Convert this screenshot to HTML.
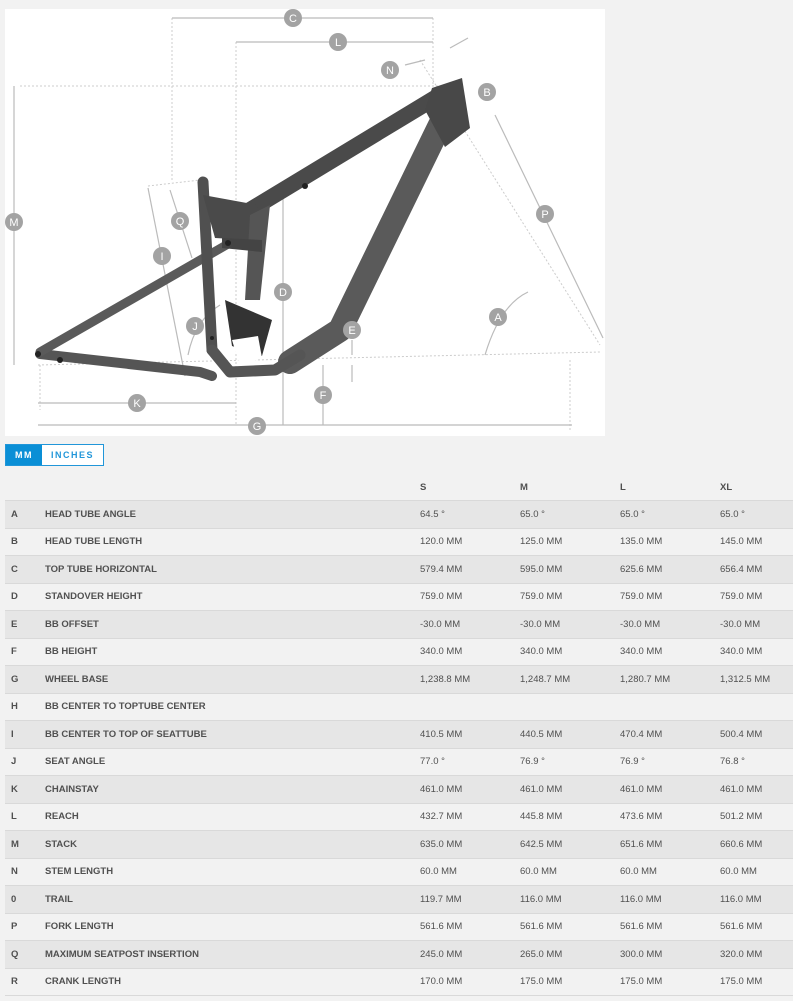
<!DOCTYPE html>
<html><head><style>
body{margin:0;background:#f2f2f2;font-family:"Liberation Sans",sans-serif;width:793px;height:1001px;position:relative;overflow:hidden}
.img{position:absolute;left:5px;top:9px;width:600px;height:427px;background:#fff}
.btns{position:absolute;left:5px;top:444px;height:20px;display:flex;border:1px solid #2196d9}
.btns div{font-size:9px;font-weight:bold;letter-spacing:1.5px;line-height:20px;padding:0 9px}
.mm{background:#0a8fd6;color:#fff}
.in{background:#fff;color:#2196d9}
table{position:absolute;left:5px;top:475px;width:788px;border-collapse:collapse;table-layout:fixed;font-size:9.5px;color:#505050}
td{height:26.5px;padding:0;border-bottom:1px solid #d9d9d9;white-space:nowrap}
tr.h td{height:25px;font-weight:bold}
tr:nth-child(even) td{background:#e6e6e6}
td.a{padding-left:6px;font-weight:bold}
td.n{font-weight:bold}
</style></head><body>
<div class="img">
<svg width="600" height="427" viewBox="5 9 600 427" xmlns="http://www.w3.org/2000/svg">
<g stroke="#ccc" stroke-width="1" stroke-dasharray="2,2" fill="none">
<line x1="20" y1="86" x2="440" y2="86"/>
<line x1="38" y1="365" x2="600" y2="352"/>
<line x1="172" y1="18" x2="172" y2="180"/>
<line x1="236" y1="42" x2="236" y2="425"/>
<line x1="433" y1="18" x2="433" y2="86"/>
<line x1="420" y1="60" x2="600" y2="345"/>
<line x1="148" y1="186" x2="200" y2="180"/>
<line x1="40" y1="365" x2="40" y2="410"/>
<line x1="570" y1="360" x2="570" y2="430"/>
</g>
<g stroke="#bbb" stroke-width="1.2" fill="none">
<line x1="14" y1="86" x2="14" y2="365"/>
<line x1="172" y1="18" x2="433" y2="18"/>
<line x1="236" y1="42" x2="433" y2="42"/>
<line x1="495" y1="115" x2="603" y2="338"/>
<line x1="148" y1="188" x2="185" y2="376"/>
<line x1="170" y1="190" x2="192" y2="258"/>
<line x1="283" y1="185" x2="283" y2="425"/>
<line x1="38" y1="403" x2="236" y2="403"/>
<line x1="38" y1="425" x2="572" y2="425"/>
<line x1="323" y1="365" x2="323" y2="425"/>
<line x1="352" y1="340" x2="352" y2="355"/>
<line x1="352" y1="365" x2="352" y2="382"/>
<path d="M485 355 Q500 305 528 292"/>
<path d="M188 355 Q195 320 220 305"/>
<line x1="450" y1="48" x2="468" y2="38"/>
<line x1="405" y1="65" x2="425" y2="60"/>
</g>
<g fill="none" stroke-linecap="round" stroke-linejoin="round">
<path d="M40 354 L200 372 L212 376" stroke="#555" stroke-width="10"/>
<path d="M40 352 L235 240" stroke="#5a5a5a" stroke-width="9"/>
<path d="M250 210 L440 95" stroke="#4a4a4a" stroke-width="16"/>
<path d="M440 125 L340 330 L290 362" stroke="#5a5a5a" stroke-width="24"/>
<path d="M203 182 L212 350" stroke="#505050" stroke-width="11"/>
<path d="M212 350 L230 372 L275 370 L300 355" stroke="#555" stroke-width="11"/>
</g>
<g stroke="none">
<path d="M203 195 L258 205 L250 240 L215 238 Z" fill="#4a4a4a"/>
<path d="M250 215 L270 205 L260 300 L245 300 Z" fill="#555"/>
<path d="M432 88 L462 78 L470 128 L445 147 L425 110 Z" fill="#484848"/>
<path d="M222 238 L262 240 L262 252 L222 248 Z" fill="#444"/>
<path d="M225 300 L272 320 L262 356 L232 346 Z" fill="#333"/>
<path d="M232 340 L258 336 L262 358 L240 366 Z" fill="#fff"/>
</g>
<g fill="#222"><circle cx="38" cy="354" r="3"/><circle cx="60" cy="360" r="3"/><circle cx="228" cy="243" r="3"/><circle cx="212" cy="338" r="2"/><circle cx="305" cy="186" r="3"/></g>
<g font-size="11" fill="#fff" text-anchor="middle" font-family="Liberation Sans">
<g fill="#a3a3a3">
<circle cx="293" cy="18" r="9"/><circle cx="338" cy="42" r="9"/><circle cx="390" cy="70" r="9"/><circle cx="487" cy="92" r="9"/><circle cx="545" cy="214" r="9"/><circle cx="14" cy="222" r="9"/><circle cx="180" cy="221" r="9"/><circle cx="162" cy="256" r="9"/><circle cx="283" cy="292" r="9"/><circle cx="195" cy="326" r="9"/><circle cx="352" cy="330" r="9"/><circle cx="498" cy="317" r="9"/><circle cx="323" cy="395" r="9"/><circle cx="137" cy="403" r="9"/><circle cx="257" cy="426" r="9"/></g>
<text x="293" y="22">C</text><text x="338" y="46">L</text><text x="390" y="74">N</text><text x="487" y="96">B</text><text x="545" y="218">P</text><text x="14" y="226">M</text><text x="180" y="225">Q</text><text x="162" y="260">I</text><text x="283" y="296">D</text><text x="195" y="330">J</text><text x="352" y="334">E</text><text x="498" y="321">A</text><text x="323" y="399">F</text><text x="137" y="407">K</text><text x="257" y="430">G</text>
</g>
</svg>
</div>
<div class="btns"><div class="mm">MM</div><div class="in">INCHES</div></div>
<table>
<colgroup><col style="width:40px"><col style="width:375px"><col style="width:100px"><col style="width:100px"><col style="width:100px"><col style="width:73px"></colgroup>
<tr class="h"><td class="a"></td><td class="n"></td><td>S</td><td>M</td><td>L</td><td>XL</td></tr>
<tr><td class="a">A</td><td class="n">HEAD TUBE ANGLE</td><td>64.5 °</td><td>65.0 °</td><td>65.0 °</td><td>65.0 °</td></tr>
<tr><td class="a">B</td><td class="n">HEAD TUBE LENGTH</td><td>120.0 MM</td><td>125.0 MM</td><td>135.0 MM</td><td>145.0 MM</td></tr>
<tr><td class="a">C</td><td class="n">TOP TUBE HORIZONTAL</td><td>579.4 MM</td><td>595.0 MM</td><td>625.6 MM</td><td>656.4 MM</td></tr>
<tr><td class="a">D</td><td class="n">STANDOVER HEIGHT</td><td>759.0 MM</td><td>759.0 MM</td><td>759.0 MM</td><td>759.0 MM</td></tr>
<tr><td class="a">E</td><td class="n">BB OFFSET</td><td>-30.0 MM</td><td>-30.0 MM</td><td>-30.0 MM</td><td>-30.0 MM</td></tr>
<tr><td class="a">F</td><td class="n">BB HEIGHT</td><td>340.0 MM</td><td>340.0 MM</td><td>340.0 MM</td><td>340.0 MM</td></tr>
<tr><td class="a">G</td><td class="n">WHEEL BASE</td><td>1,238.8 MM</td><td>1,248.7 MM</td><td>1,280.7 MM</td><td>1,312.5 MM</td></tr>
<tr><td class="a">H</td><td class="n">BB CENTER TO TOPTUBE CENTER</td><td></td><td></td><td></td><td></td></tr>
<tr><td class="a">I</td><td class="n">BB CENTER TO TOP OF SEATTUBE</td><td>410.5 MM</td><td>440.5 MM</td><td>470.4 MM</td><td>500.4 MM</td></tr>
<tr><td class="a">J</td><td class="n">SEAT ANGLE</td><td>77.0 °</td><td>76.9 °</td><td>76.9 °</td><td>76.8 °</td></tr>
<tr><td class="a">K</td><td class="n">CHAINSTAY</td><td>461.0 MM</td><td>461.0 MM</td><td>461.0 MM</td><td>461.0 MM</td></tr>
<tr><td class="a">L</td><td class="n">REACH</td><td>432.7 MM</td><td>445.8 MM</td><td>473.6 MM</td><td>501.2 MM</td></tr>
<tr><td class="a">M</td><td class="n">STACK</td><td>635.0 MM</td><td>642.5 MM</td><td>651.6 MM</td><td>660.6 MM</td></tr>
<tr><td class="a">N</td><td class="n">STEM LENGTH</td><td>60.0 MM</td><td>60.0 MM</td><td>60.0 MM</td><td>60.0 MM</td></tr>
<tr><td class="a">0</td><td class="n">TRAIL</td><td>119.7 MM</td><td>116.0 MM</td><td>116.0 MM</td><td>116.0 MM</td></tr>
<tr><td class="a">P</td><td class="n">FORK LENGTH</td><td>561.6 MM</td><td>561.6 MM</td><td>561.6 MM</td><td>561.6 MM</td></tr>
<tr><td class="a">Q</td><td class="n">MAXIMUM SEATPOST INSERTION</td><td>245.0 MM</td><td>265.0 MM</td><td>300.0 MM</td><td>320.0 MM</td></tr>
<tr><td class="a">R</td><td class="n">CRANK LENGTH</td><td>170.0 MM</td><td>175.0 MM</td><td>175.0 MM</td><td>175.0 MM</td></tr>
</table>
</body></html>
